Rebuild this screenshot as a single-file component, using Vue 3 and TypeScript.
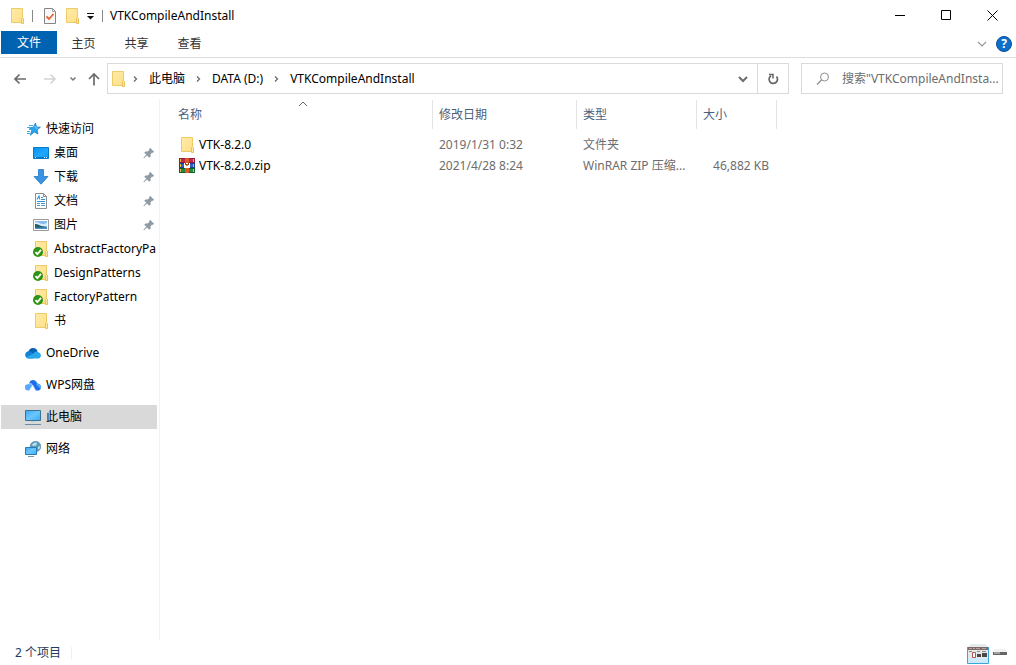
<script setup lang="ts">
import { ref } from 'vue'

interface NavItem {
  label: string
  icon: string
  level: number
  pinned?: boolean
  gap?: boolean
}

interface FileRow {
  name: string
  icon: string
  modified: string
  type: string
  size: string
}

const tabs: string[] = ['主页', '共享', '查看']
const crumbs: string[] = ['此电脑', 'DATA (D:)', 'VTKCompileAndInstall']
const selected = ref('此电脑')
const query = ref('')

const nav: NavItem[] = [
  { label: '快速访问', icon: 'star', level: 0 },
  { label: '桌面', icon: 'desktop', level: 1, pinned: true },
  { label: '下载', icon: 'download', level: 1, pinned: true },
  { label: '文档', icon: 'document', level: 1, pinned: true },
  { label: '图片', icon: 'picture', level: 1, pinned: true },
  { label: 'AbstractFactoryPa', icon: 'synced', level: 1 },
  { label: 'DesignPatterns', icon: 'synced', level: 1 },
  { label: 'FactoryPattern', icon: 'synced', level: 1 },
  { label: '书', icon: 'folder', level: 1 },
  { label: 'OneDrive', icon: 'onedrive', level: 0, gap: true },
  { label: 'WPS网盘', icon: 'wps', level: 0, gap: true },
  { label: '此电脑', icon: 'computer', level: 0, gap: true },
  { label: '网络', icon: 'network', level: 0, gap: true },
]

const files: FileRow[] = [
  { name: 'VTK-8.2.0', icon: 'folder', modified: '2019/1/31 0:32', type: '文件夹', size: '' },
  { name: 'VTK-8.2.0.zip', icon: 'rar', modified: '2021/4/28 8:24', type: 'WinRAR ZIP 压缩...', size: '46,882 KB' },
]
</script>

<template>
  <svg class="defs" aria-hidden="true">
    <defs>
      <linearGradient id="g-folder" x1="0" y1="0" x2="1" y2="1">
        <stop offset="0" stop-color="#ffebaa" /><stop offset="1" stop-color="#fddf86" />
      </linearGradient>
      <linearGradient id="g-screen" x1="0" y1="0" x2="1" y2="1">
        <stop offset="0" stop-color="#35a9f6" /><stop offset=".5" stop-color="#6cc7fd" /><stop offset="1" stop-color="#38aaf5" />
      </linearGradient>
      <linearGradient id="g-desk" x1="0" y1="0" x2="1" y2="1">
        <stop offset="0" stop-color="#0b90ee" /><stop offset=".6" stop-color="#1ea9ff" /><stop offset="1" stop-color="#0a95f5" />
      </linearGradient>
    </defs>
    <symbol id="i-folder" viewBox="0 0 16 16">
      <path d="M2.5.5h11v14h-11z" fill="url(#g-folder)" stroke="#edcb66" />
      <path d="M12.5 15.5v-5l1-1 1 1v5z" fill="#ffe9a3" stroke="#e8c158" />
    </symbol>
    <symbol id="i-synced" viewBox="0 0 16 16">
      <path d="M2.5.5h11v14h-11z" fill="url(#g-folder)" stroke="#edcb66" />
      <path d="M12.5 15.5v-5l1-1 1 1v5z" fill="#ffe9a3" stroke="#e8c158" />
      <circle cx="5" cy="11" r="5" fill="#2d9411" />
      <path d="M2.4 11.2l2 2 3.6-4.3" fill="none" stroke="#fff" stroke-width="1.8" />
    </symbol>
    <symbol id="i-star" viewBox="0 0 16 16">
      <path d="M10.5 2l.9 4 4 .2-3.3 2.6.8 4.2-3.6-2-4 3.2 1.5-4.8-2.6-2.6 4-.4z" fill="#28a4ee" stroke="#1682cb" stroke-width=".8" />
      <path d="M4 4.500h4M2 6.500h3M4 8.500h2M2 10.500h3M2 12.500h3" stroke="#3ba9ea" />
      <path d="M10 5l.5 2 2.4.2" fill="none" stroke="#76cfff" />
    </symbol>
    <symbol id="i-desktop" viewBox="0 0 16 16">
      <path d="M.5 2.500h15v11H.5z" fill="url(#g-desk)" stroke="#087bc8" />
      <path d="M1 12.500h14" stroke="#0875bd" />
      <path d="M2 12.500h1M11 12.500h1M13 12.500h1" stroke="#e1f3ff" />
    </symbol>
    <symbol id="i-download" viewBox="0 0 16 16">
      <path d="M5.500.5h5v7h4.500L8 15.200 1 7.500h4.500z" fill="#3794e5" stroke="#2478c5" stroke-width=".8" />
    </symbol>
    <symbol id="i-document" viewBox="0 0 16 16">
      <path d="M2.500.5h8l3 3v12h-11z" fill="#fff" stroke="#8a8f94" />
      <path d="M10.500.5v3h3" fill="none" stroke="#8a8f94" />
      <path d="M4 6.500l2-3.500.8 3.500M8 4.500h2M8 6.500h4M4 8.500h8" fill="none" stroke="#2e93d8" stroke-width="1.100" />
      <path d="M4 10.500h3M8 10.500h4M4 12.500h3M8 12.500h4" stroke="#4f9bc6" />
    </symbol>
    <symbol id="i-picture" viewBox="0 0 16 16">
      <path d="M.5 2.500h15v11H.5z" fill="#fff" stroke="#9b9b9b" />
      <path d="M2 4h12v8H2z" fill="#8bbcf0" />
      <path d="M2 5.500c4-1 4 1 7 1.500s3-.5 5-1V9H2z" fill="#d9eefb" />
      <path d="M2 7c3-.2 4 1.200 7 2.200l5 .8V12H2z" fill="#245f68" />
      <path d="M2 10.600c4 .5 7-.3 12-.5V12H2z" fill="#4d8fc0" />
    </symbol>
    <symbol id="i-onedrive" viewBox="0 0 16 16">
      <path d="M3.500 6.500a4.700 4.700 0 0 1 9-.2L8 10z" fill="#0761b5" />
      <path d="M3.500 13.500a3.700 3.700 0 1 1 2-7L12 10.500 8 13.500z" fill="#1283d9" />
      <path d="M8 9l1.500-1.700c2-1.500 4-.7 4.500.5 2.700.5 2.600 5.700-.8 5.700H3.500c-1 0-2-.6-2.400-1.200z" fill="#28a8ea" />
    </symbol>
    <symbol id="i-wps" viewBox="0 0 16 16">
      <path d="M3 13.500a3.100 3.100 0 0 1-.3-6.200L5 6.800l3 1.700-3.500 5z" fill="#58a8fb" />
      <path d="M4 6.500C5.500 1.500 11 2 12.200 6.500c3.500.3 4.500 3.500 3.300 5.500-.8 1-1.500 1.500-2.700 1.500h-2.300L7.200 8z" fill="#1c6eea" />
      <path d="M12.200 6.500c3.700.3 4.500 3.500 3.300 5.500L11 7z" fill="#58a8fb" />
      <path d="M4.300 7c2.400-1 3.300.8 6.200 6.500M7.600 8.300l-3 5.200" fill="none" stroke="#fff" stroke-width=".8" />
    </symbol>
    <symbol id="i-computer" viewBox="0 0 16 16">
      <path d="M.5 1.500h15v10H.5z" fill="url(#g-screen)" stroke="#3b7291" />
      <path d="M0 15.500h16" stroke="#6f8ba5" />
      <path d="M6 12.500h4" stroke="#b7d1e2" />
    </symbol>
    <symbol id="i-network" viewBox="0 0 16 16">
      <circle cx="10.500" cy="5.500" r="5.300" fill="#5b9cbc" stroke="#4c7f99" stroke-width=".6" />
      <path d="M7 3.500l3-2 2 .5-1 2.500-3 .6zM13 6l2-1-.3 2.500-1.700 1z" fill="#c4e2ec" />
      <path d="M.5 6.500h11v7H.5z" fill="url(#g-screen)" stroke="#297db6" />
      <path d="M3 15.500h6" stroke="#7898ae" />
    </symbol>
    <symbol id="i-rar" viewBox="0 0 16 16">
      <path d="M0 0h16v5H0z" fill="#8f1b3a" /><path d="M1 1h14v3H1z" fill="#c2284b" />
      <path d="M0 5h16v5H0z" fill="#1d3f93" /><path d="M1 6h14v3H1z" fill="#2c63c0" />
      <path d="M0 10h16v5H0z" fill="#10602a" /><path d="M1 11h14v3H1z" fill="#22893e" />
      <path d="M1 1h1v3H1zM1 6h1v3H1zM1 11h1v3H1zM14 1h1v3h-1zM14 6h1v3h-1zM14 11h1v3h-1z" fill="#e6bd48" />
      <path d="M6 0h4v15H6z" fill="#dc5b24" />
      <path d="M5 5h6v5H5z" fill="#fff" /><path d="M6 5h1v2H6zM9 5h1v2H9z" fill="#8b401e" />
      <path d="M7 6h2v2H7z" fill="#dc5b24" />
    </symbol>
    <symbol id="i-pin" viewBox="0 0 12 12">
      <path d="M7.200 1.200l3.600 3.600-1 .8-.8-.2-1.800 2 .1 2-1 1L4 8.200 1 11l-.2-.2 2.800-3-2-2.100 1-1 2 .1 2-1.800-.2-.8z" fill="#8e9aa5" stroke="#8e9aa5" stroke-width=".6" />
    </symbol>
    <symbol id="i-chev-right" viewBox="0 0 8 8">
      <path d="M2 1.500L4.500 4 2 6.500" fill="none" stroke="#6b6b6b" stroke-width="1.300" />
    </symbol>
  </svg>

  <div class="window">
    <header class="titlebar">
      <svg class="ico"><use href="#i-folder" /></svg>
      <span class="bar first"></span>
      <button class="plain" aria-label="属性">
        <svg class="ico" viewBox="0 0 16 16">
          <path d="M2.500.5h8l3 3v12h-11z" fill="#f8f8f8" stroke="#858585" />
          <path d="M10.500.5v3h3" fill="none" stroke="#a5a5a5" />
          <path d="M4.500 8.500L7 11l4.500-5" fill="none" stroke="#e8622f" stroke-width="1.800" />
        </svg>
      </button>
      <button class="plain new" aria-label="新建文件夹"><svg class="ico"><use href="#i-folder" /></svg></button>
      <button class="plain more" aria-label="自定义快速访问工具栏">
        <svg width="8" height="8" viewBox="0 0 8 8"><path d="M0 1.500h7" stroke="#111" /><path d="M0 4h7L3.500 7.500z" fill="#111" /></svg>
      </button>
      <span class="bar"></span>
      <h1>VTKCompileAndInstall</h1>
      <div class="controls">
        <button class="plain" aria-label="最小化"><svg width="11" height="11" viewBox="0 0 11 11"><path d="M0 5.500h10" stroke="#000" /></svg></button>
        <button class="plain" aria-label="最大化"><svg width="11" height="11" viewBox="0 0 11 11"><path d="M.5.5h9v9h-9z" fill="none" stroke="#000" /></svg></button>
        <button class="plain" aria-label="关闭"><svg width="11" height="11" viewBox="0 0 11 11"><path d="M.5.5l10 10M10.500.5l-10 10" stroke="#000" /></svg></button>
      </div>
    </header>

    <nav class="ribbon">
      <button class="tab file">文件</button>
      <button v-for="tab in tabs" :key="tab" class="tab">{{ tab }}</button>
      <button class="plain expand" aria-label="展开功能区">
        <svg width="10" height="6" viewBox="0 0 10 6"><path d="M1 1l4 4 4-4" fill="none" stroke="#999" stroke-width="1.200" /></svg>
      </button>
      <button class="help" aria-label="帮助">?</button>
    </nav>

    <div class="toolbar">
      <div class="arrows">
        <button class="plain" aria-label="后退"><svg width="14" height="12" viewBox="0 0 14 12"><path d="M13 6H2M6.500 1.500L2 6l4.500 4.500" fill="none" stroke="#6b6b6b" stroke-width="1.700" /></svg></button>
        <button class="plain" aria-label="前进"><svg width="14" height="12" viewBox="0 0 14 12"><path d="M1 6h11M7.500 1.500L12 6l-4.500 4.500" fill="none" stroke="#d3d3d3" stroke-width="1.500" /></svg></button>
        <button class="plain small" aria-label="最近位置"><svg width="8" height="6" viewBox="0 0 8 6"><path d="M1.500 1.500L4 4l2.500-2.500" fill="none" stroke="#777" stroke-width="1.500" /></svg></button>
        <button class="plain" aria-label="上移"><svg width="12" height="14" viewBox="0 0 12 14"><path d="M6 13.500V2M1 7l5-5 5 5" fill="none" stroke="#6b6b6b" stroke-width="1.700" /></svg></button>
      </div>
      <div class="address">
        <svg class="ico"><use href="#i-folder" /></svg>
        <template v-for="crumb in crumbs" :key="crumb">
          <svg class="chev"><use href="#i-chev-right" /></svg>
          <button class="plain">{{ crumb }}</button>
        </template>
        <button class="plain drop" aria-label="以前的位置"><svg width="10" height="8" viewBox="0 0 10 8"><path d="M1 2l4 4 4-4" fill="none" stroke="#6d6d6d" stroke-width="2" /></svg></button>
        <button class="plain refresh" aria-label="刷新">
          <svg width="12" height="12" viewBox="0 0 12 12"><path d="M9.500 3.500A4.200 4.200 0 1 1 4 2.700" fill="none" stroke="#666" stroke-width="1.700" /><path d="M2 1.500h4V5.500" fill="none" stroke="#666" stroke-width="1.500" /></svg>
        </button>
      </div>
      <label class="search">
        <svg width="14" height="14" viewBox="0 0 14 14"><circle cx="8.500" cy="5" r="4" fill="none" stroke="#8d8d8d" /><path d="M5.500 8L1 12.500" stroke="#8d8d8d" stroke-width="1.200" /></svg>
        <input v-model="query" type="text" aria-label="搜索" placeholder="搜索&quot;VTKCompileAndInsta..." />
      </label>
    </div>

    <main class="body">
      <nav class="sidebar">
        <a
          v-for="item in nav"
          :key="item.label"
          href="#"
          class="item"
          :class="{ child: item.level === 1, gap: item.gap, active: selected === item.label }"
          @click.prevent="selected = item.label"
        >
          <svg class="ico"><use :href="'#i-' + item.icon" /></svg>
          <span class="label">{{ item.label }}</span>
          <svg v-if="item.pinned" class="pin"><use href="#i-pin" /></svg>
        </a>
      </nav>
      <section class="content">
        <table>
          <colgroup><col class="c-name" /><col class="c-date" /><col class="c-type" /><col class="c-size" /></colgroup>
          <thead>
            <tr>
              <th>
                <button class="plain">名称</button>
                <svg class="sort" width="10" height="6" viewBox="0 0 10 6"><path d="M1 5l4-4 4 4" fill="none" stroke="#666" /></svg>
              </th>
              <th><button class="plain">修改日期</button></th>
              <th><button class="plain">类型</button></th>
              <th><button class="plain">大小</button></th>
            </tr>
          </thead>
          <tbody>
            <tr v-for="file in files" :key="file.name">
              <td><span class="name"><svg class="ico"><use :href="'#i-' + file.icon" /></svg>{{ file.name }}</span></td>
              <td>{{ file.modified }}</td>
              <td>{{ file.type }}</td>
              <td class="num">{{ file.size }}</td>
            </tr>
          </tbody>
        </table>
      </section>
    </main>

    <footer class="status">
      <span class="count">2 个项目</span>
      <button class="plain" aria-label="详细信息">
        <svg width="22" height="22" viewBox="0 0 22 22">
          <path d="M.5 5V21.500h21V5" fill="#cdeafa" stroke="#3ba6db" />
          <path d="M1 5L4 2h14l3 3z" fill="#e4eaed" />
          <path d="M1 5h20v3H1z" fill="#7d6a67" />
          <path d="M2 6.500h3M6 6.500h2M9 6.500h4M15 6.500h4" stroke="#b9a19b" />
          <path d="M1 8h20v8H1z" fill="#e3e8ea" />
          <path d="M2 9.500h3M10 9.500h3M15 9.500h4" stroke="#8e8784" />
          <path d="M5.500 10.500h3v5h-3z" fill="#fff" stroke="#b55052" />
          <path d="M10 12h4v3h-4zM15 11h5v4h-5z" fill="#4b4646" />
        </svg>
      </button>
      <button class="plain" aria-label="大图标">
        <svg width="16" height="10" viewBox="0 0 16 10"><path d="M3 1h10l2 3H1z" fill="#f0f0f0" /><path d="M1 4h14v3H1z" fill="#666" /><path d="M2 5h6" stroke="#ddd" /></svg>
      </button>
    </footer>
  </div>
</template>

<style>
body {
  margin: 0;
  background: #fff;
}
</style>

<style scoped>
.defs {
  position: absolute;
  width: 0;
  height: 0;
}
.window {
  display: flex;
  flex-direction: column;
  min-height: 100vh;
  font: 12px/16px "Noto Sans", "Noto Sans CJK SC", sans-serif;
  color: #000;
}
button,
input {
  font: inherit;
  color: inherit;
}
svg {
  display: block;
  flex: none;
}
.plain {
  display: flex;
  align-items: center;
  justify-content: center;
  padding: 0;
  border: 0;
  background: none;
}
.ico {
  width: 16px;
  height: 16px;
}
.titlebar {
  display: flex;
  align-items: center;
  height: 31px;
  padding-left: 9px;
}
.bar {
  width: 1px;
  height: 12px;
  background: #888;
}
.bar.first {
  margin: 0 9px 0 7px;
}
.new {
  margin: 0 7px 0 6px;
}
.more {
  margin-right: 7px;
}
.titlebar h1 {
  margin: 0 0 0 7px;
  font-size: 12px;
  font-weight: 400;
}
.controls {
  display: flex;
  margin-left: auto;
  padding-right: 1px;
}
.controls .plain {
  width: 46px;
  height: 30px;
}
.ribbon {
  display: flex;
  align-items: flex-start;
  height: 26px;
  padding: 0 4px 0 1px;
  border-bottom: 1px solid #dcdcdc;
}
.tab {
  width: 53px;
  height: 25px;
  padding: 0;
  border: 0;
  background: none;
  color: #333;
}
.tab.file {
  width: 56px;
  height: 23px;
  background: #0063b1;
  color: #fff;
}
.expand {
  width: 16px;
  height: 26px;
  margin-left: auto;
}
.help {
  width: 16px;
  height: 16px;
  margin: 5px 0 0 6px;
  padding: 0;
  border: 1px solid #0a4f94;
  border-radius: 50%;
  background: #0c6fcb;
  color: #fff;
  font-weight: 700;
  line-height: 14px;
}
.toolbar {
  display: flex;
  align-items: center;
  padding: 5px 13px 5px 0;
}
.arrows {
  display: flex;
  align-items: center;
  width: 94px;
  padding-left: 13px;
  gap: 16px;
}
.arrows .small {
  width: 8px;
  margin: 0 -5px 0 -4px;
}
.address {
  display: flex;
  flex: 1;
  align-items: center;
  min-width: 0;
  height: 29px;
  padding-left: 2px;
  border: 1px solid #d9d9d9;
}
.chev {
  width: 8px;
  height: 8px;
  margin: 0 9px 0 10px;
}
.ico + .chev {
  margin-left: 6px;
}
.drop {
  width: 28px;
  height: 29px;
  margin-left: auto;
}
.refresh {
  width: 31px;
  height: 29px;
  border-left: 1px solid #d9d9d9;
}
.search {
  display: flex;
  align-items: center;
  width: 200px;
  height: 29px;
  margin-left: 12px;
  gap: 12px;
  border: 1px solid #d9d9d9;
}
.search svg {
  margin-left: 14px;
}
.search input {
  flex: 1;
  min-width: 0;
  padding: 0;
  border: 0;
  outline: 0;
  background: none;
}
.search input::placeholder {
  color: #6d6d6d;
  opacity: 1;
}
.body {
  display: flex;
  flex: 1;
}
.sidebar {
  flex: 0 0 160px;
  box-sizing: border-box;
  padding: 18px 2px 0 1px;
  border-right: 1px solid #f2f2f2;
}
.item {
  display: flex;
  align-items: center;
  height: 24px;
  padding-left: 24px;
  gap: 5px;
  color: #000;
  text-decoration: none;
}
.item.child {
  padding-left: 32px;
}
.item.gap {
  margin-top: 8px;
}
.item.active {
  background: #d9d9d9;
}
.label {
  flex: 1;
  white-space: nowrap;
}
.pin {
  width: 12px;
  height: 12px;
  margin-right: 2px;
}
.content {
  flex: 1;
  min-width: 0;
  padding-top: 1px;
}
table {
  width: 617px;
  table-layout: fixed;
  border-collapse: separate;
  border-spacing: 0;
}
.c-name {
  width: 273px;
}
.c-date {
  width: 144px;
}
.c-type {
  width: 120px;
}
.c-size {
  width: 80px;
}
th {
  position: relative;
  height: 29px;
  padding: 0 6px;
  border-right: 1px solid #e4e4e4;
  color: #4c607a;
  font-weight: 400;
}
th:first-child {
  padding-left: 18px;
}
.sort {
  position: absolute;
  top: 1px;
  left: 138px;
}
thead::after {
  content: "";
  display: block;
  height: 5px;
}
td {
  height: 21px;
  padding: 0 8px 0 6px;
  color: #6d6d6d;
  white-space: nowrap;
}
td:first-child {
  padding-left: 19px;
  color: #000;
}
.name {
  display: flex;
  align-items: center;
  gap: 4px;
}
.num {
  text-align: right;
}
.status {
  display: flex;
  align-items: center;
  height: 25px;
  padding: 0 8px 0 15px;
  gap: 3px;
}
.count {
  margin-right: auto;
  padding-right: 10px;
  border-right: 1px solid #f0f0f0;
  color: #1e395b;
  line-height: 12px;
}
</style>
